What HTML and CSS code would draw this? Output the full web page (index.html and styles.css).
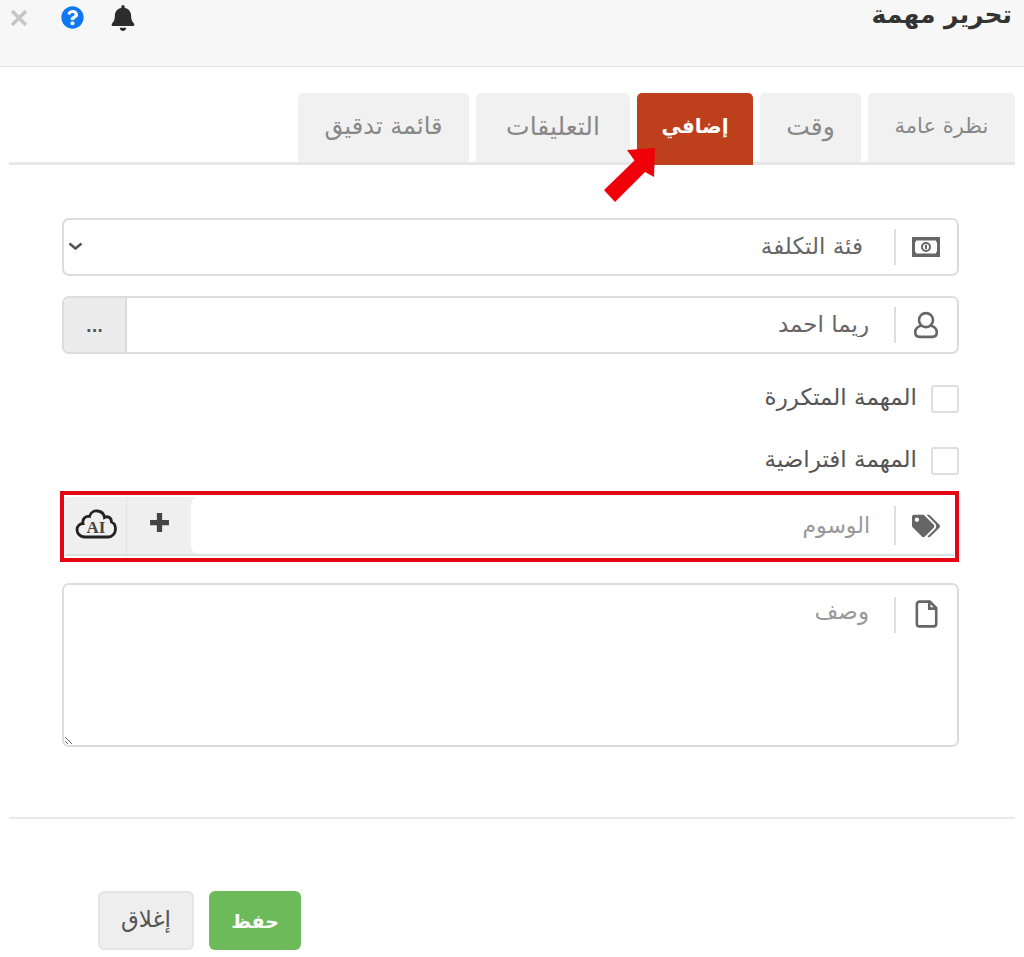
FILE: index.html
```html
<!doctype html>
<html lang="ar" dir="rtl">
<head>
<meta charset="utf-8">
<title>تحرير مهمة</title>
	<link rel="stylesheet" href="styles.css">
</head>

<body>
	<div class="head">
		<h1>تحرير مهمة</h1>
		<div class="head-tools">
			<svg class="bell" viewBox="0 0 448 512"><path d="M224 512c35.32 0 63.97-28.65 63.97-64H160.03c0 35.35 28.65 64 63.97 64zm215.39-149.71c-19.32-20.76-55.47-51.99-55.47-154.29 0-77.7-54.48-139.9-127.94-155.16V32c0-17.67-14.32-32-31.98-32s-31.98 14.33-31.98 32v20.84C118.56 68.1 64.08 130.3 64.08 208c0 102.3-36.15 133.53-55.47 154.29-6 6.45-8.66 14.16-8.61 21.71.11 16.4 12.98 32 32.1 32h383.8c19.12 0 32-15.6 32.1-32 .05-7.55-2.61-15.27-8.61-21.71z"/></svg>
			<svg class="help" viewBox="0 0 512 512"><path d="M504 256c0 136.997-111.043 248-248 248S8 392.997 8 256C8 119.083 119.043 8 256 8s248 111.083 248 248zM262.655 90c-54.497 0-89.255 22.957-116.549 63.758-3.536 5.286-2.353 12.415 2.715 16.258l34.699 26.31c5.205 3.947 12.621 3.008 16.665-2.122 17.864-22.658 30.113-35.797 57.303-35.797 20.429 0 45.698 13.148 45.698 32.958 0 14.976-12.363 22.667-32.534 33.976C247.128 238.528 216 254.941 216 296v4c0 6.627 5.373 12 12 12h56c6.627 0 12-5.373 12-12v-1.333c0-28.462 83.186-29.647 83.186-106.667 0-58.002-60.165-102-116.531-102zM256 338c-25.365 0-46 20.635-46 46 0 25.364 20.635 46 46 46s46-20.636 46-46c0-25.365-20.635-46-46-46z"/></svg>
			<svg class="close" viewBox="0 0 18 18"><path d="M2 2l14 14M16 2L2 16"/></svg>
		</div>
	</div>

	<div class="tabs">
		<a class="tab tab-1">نظرة عامة</a>
		<a class="tab tab-2">وقت</a>
		<a class="tab tab-3 active">إضافي</a>
		<a class="tab tab-4">التعليقات</a>
		<a class="tab tab-5">قائمة تدقيق</a>
		<svg class="arrow" viewBox="0 0 60 60"><path d="M55 1L27 3 34.500 13.500 4 43 15 55 45 25 54 30z"/></svg>
	</div>

	<form class="form">
		<div class="field">
			<span class="field-icon">
				<svg viewBox="0 0 30 26"><path class="bill" fill-rule="evenodd" d="M1 3h28v20H1zM5 6.500a2 2 0 0 1-1 2v9a2 2 0 0 1 1 2h20a2 2 0 0 1 1-2v-9a2 2 0 0 1-1-2z"/><path class="bill" fill-rule="evenodd" d="M15 8a5 5 0 1 0 0 10 5 5 0 0 0 0-10zm0 2a3 3 0 1 1 0 6 3 3 0 0 1 0-6z"/><path class="bill" d="M14 11h2v4h-2z"/></svg>
			</span>
			<select class="control">
				<option>فئة التكلفة</option>
			</select>
			<svg class="chevron" viewBox="0 0 15 8"><path d="M1.500 1.500l6 5 6-5"/></svg>
		</div>

		<div class="field field-2">
			<span class="field-icon">
				<svg viewBox="0 0 24 26"><path class="line" d="M12 2a6.500 6.500 0 0 0 0 13 6.500 6.500 0 0 0 0-13zM8 13.500C4 14.500 2 17 2 20c0 2.500 1.500 4 4 4h12c2.500 0 4-1.500 4-4 0-3-2-5.500-6-6.500"/></svg>
			</span>
			<input class="control value" type="text" value="ريما احمد">
			<button class="addon-more" type="button">...</button>
		</div>

		<label class="check check-1"><input type="checkbox"><span>المهمة المتكررة</span></label>
		<label class="check check-2"><input type="checkbox"><span>المهمة افتراضية</span></label>

		<div class="highlight">
			<div class="field field-tags">
				<span class="field-icon">
					<svg viewBox="0 0 640 512"><path class="solid" d="M497.941 225.941L286.059 14.059A48 48 0 0 0 252.118 0H48C21.49 0 0 21.49 0 48v204.118a48 48 0 0 0 14.059 33.941l211.882 211.882c18.744 18.745 49.136 18.746 67.882 0l204.118-204.118c18.745-18.745 18.745-49.137 0-67.882zM112 160c-26.51 0-48-21.49-48-48s21.49-48 48-48 48 21.49 48 48-21.49 48-48 48zm513.941 133.823L421.823 497.941c-18.745 18.745-49.137 18.745-67.882 0l-.36-.36L527.64 323.522c16.999-16.999 26.36-39.6 26.36-63.64s-9.362-46.641-26.36-63.64L331.397 0h48.721a48 48 0 0 1 33.941 14.059l211.882 211.882c18.745 18.745 18.745 49.137 0 67.882z"/></svg>
				</span>
				<input class="control" type="text" placeholder="الوسوم">
				<div class="addons">
					<button class="addon-btn" type="button"><svg viewBox="0 0 20 20"><path class="plus" d="M10 1v18M1 10h18"/></svg></button>
					<button class="addon-btn addon-ai" type="button">
						<svg viewBox="0 0 42 30"><path class="cloud" d="M10 28C4.500 28 2 24 2 20.500 2 17 5 14.500 8 14.500 7 10 10.500 6.500 14.500 7.500 15.500 3.500 19 1.500 22.500 2 26.500 2.500 29 5 29.500 8.500 33 6.500 36.500 9 36.500 13 39 14 40.500 16.500 40.500 20 40.500 24.500 37 28 33 28z"/><text x="21" y="24" text-anchor="middle" class="ai">AI</text></svg>
					</button>
				</div>
			</div>
		</div>

		<div class="field field-desc">
			<span class="field-icon">
				<svg viewBox="0 0 22 26"><path class="line" d="M2.500 4A2.500 2.500 0 0 1 5 1.500h9.500l6 6V22a2.500 2.500 0 0 1-2.500 2.500H5A2.500 2.500 0 0 1 2.500 22zM14 1.500V8h6.500"/></svg>
			</span>
			<textarea class="control" placeholder="وصف"></textarea>
		</div>
	</form>

	<div class="foot">
		<button class="btn btn-save" type="button">حفظ</button>
		<button class="btn btn-close" type="button">إغلاق</button>
	</div>
</body>
</html>
```

FILE: styles.css
```css
*{padding: 0;margin: 0;box-sizing: border-box;}
body{font-family: "DejaVu Sans", "Noto Sans", sans-serif;background-color: #fff;color: #555;height: 957px;overflow: hidden;}


.head{
	height: 67px;
	background-color: #f7f7f7;
	border-bottom: 1px solid #e2e2e2;
	display: flex;
	justify-content: space-between;
	align-items: flex-start;
	padding: 0 12px 0 10px;}
.head h1{
	font-size: 25px;
	line-height: 30px;
	font-weight: 700;
	color: #333;}
.head-tools{
	display: flex;
	align-items: center;
	height: 35px;}
.head-tools svg{display: block;}
.bell{width: 24px;height: 26px;margin-left: 27px;fill: #2c2c2c;}
.help{width: 23px;height: 23px;margin-left: 33px;fill: #0f78f2;}
.close{width: 18px;height: 18px;}
.close path{stroke: #c6c6c6;stroke-width: 3.500;fill: none;}


.tabs{
	position: relative;
	display: flex;
	gap: 7px;
	margin: 26px 9px 0;
	height: 72px;
	border-bottom: 3px solid #e7e7e7;}
.tab{
	height: 72px;
	background-color: #f1f1f1;
	border-radius: 5px 5px 0 0;
	border-bottom: 3px solid #e7e7e7;
	color: #888;
	font-size: 23px;
	display: flex;
	align-items: center;
	justify-content: center;
	padding-bottom: 3px;}
.tab-1{width: 147px;font-size: 21px;}
.tab-2{width: 101px;font-size: 25px;}
.tab-3{width: 116px;}
.tab-4{width: 154px;font-size: 25px;}
.tab-5{width: 171px;font-size: 24px;}
.tab.active{
	background-color: #bd3f1c;
	border-bottom-color: #bd3f1c;
	color: #fff;
	font-size: 20px;
	font-weight: 700;}
.arrow{
	position: absolute;
	top: 54px;
	left: 591px;
	width: 60px;
	height: 60px;
	fill: #f00008;}


.form{
	display: flex;
	flex-direction: column;
	padding: 53px 65px 0 65px;
	margin-left: -3px;}
.field{
	display: flex;
	align-items: stretch;
	height: 58px;
	border: 2px solid #dcdcdc;
	border-radius: 7px;
	background-color: #fff;
	overflow: hidden;}
.field-2{margin-top: 20px;}
.field-icon{
	width: 63px;
	flex: none;
	display: flex;
	align-items: center;
	justify-content: center;
	position: relative;
	background-color: #fff;}
.field-icon:after{
	content: "";
	position: absolute;
	left: 0;
	top: 9px;
	bottom: 9px;
	width: 2px;
	background-color: #dedede;}
.field-icon svg{display: block;width: 30px;height: 28px;}
.bill{fill: #666;}
.line{fill: none;stroke: #666;stroke-width: 2.400;}
.solid{fill: #666;}

.control{
	flex: 1;
	min-width: 0;
	border: none;
	outline: none;
	background-color: #fff;
	font-family: inherit;
	font-size: 23px;
	color: #666;
	padding: 0 25px 3px 4px;}
select.control{padding-right: 31px;padding-bottom: 2px;appearance: none;}
.control::placeholder{color: #999;opacity: 1;}
.chevron{
	flex: none;
	align-self: center;
	width: 15px;
	height: 8px;
	margin: 0 0 2px 4px;
	fill: none;
	stroke: #555;
	stroke-width: 2.600;}

.addon-more{
	width: 63px;
	flex: none;
	border: none;
	border-right: 2px solid #dcdcdc;
	background-color: #ececec;
	font-family: inherit;
	font-size: 15px;
	font-weight: 700;
	color: #555;
	padding-top: 3px;}


.check{
	display: flex;
	align-items: center;
	gap: 14px;
	height: 28px;
	font-size: 23px;
	color: #555;}
.check span{padding-bottom: 4px;}
.check-1{margin-top: 31px;}
.check-2{margin-top: 34px;}
.check input{
	appearance: none;
	width: 28px;
	height: 28px;
	border: 2px solid #dedede;
	border-radius: 3px;
	background-color: #fff;
	flex: none;}


.highlight{
	margin: 16px 0 0 -2px;
	height: 71px;
	border: 4px solid #e30613;
	padding: 2px 1px;}
.field-tags{
	height: 59px;
	border: none;
	border-bottom: 2px solid #d9e2e2;
	border-radius: 0;
	background-color: #efefef;}
.field-tags .field-icon{width: 60px;}
.field-tags .field-icon svg{width: 28px;margin-left: 4px;}
.field-tags .control{border-radius: 8px 0 0 8px;padding: 0 24px 0 4px;font-size: 22px;}
.addons{
	display: flex;
	flex: none;
	background-color: #efefef;}
.addon-btn{
	width: 64px;
	border: none;
	background-color: #efefef;
	display: flex;
	align-items: center;
	justify-content: center;}
.addon-ai{
	width: 62px;
	border-right: 1px solid #e2e2e2;}
.addon-btn svg{display: block;width: 21px;height: 21px;margin-bottom: 6px;}
.addon-ai svg{width: 42px;height: 30px;margin-bottom: 4px;}
.plus{stroke: #444;stroke-width: 5;fill: none;}
.cloud{fill: none;stroke: #222;stroke-width: 2.800;}
.ai{font-family: "Liberation Serif", serif;font-size: 17px;font-weight: 700;fill: #444;}


.field-desc{height: 164px;margin-top: 21px;}
.field-desc .field-icon{align-items: flex-start;padding-top: 15px;}
.field-desc .field-icon:after{top: 12px;bottom: auto;height: 36px;}
textarea.control{padding-top: 13px;resize: vertical;}


.foot{
	margin: 70px 9px 0;
	border-top: 2px solid #e9e9e9;
	padding: 72px 0 0 89px;
	display: flex;
	justify-content: flex-end;
	gap: 15px;}
.btn{
	height: 59px;
	border-radius: 6px;
	font-family: inherit;
	font-size: 19px;}
.btn-save{
	width: 92px;
	border: none;
	background-color: #6dba5b;
	color: #fff;
	font-weight: 700;}
.btn-close{
	width: 96px;
	border: 2px solid #e5e5e5;
	background-color: #eee;
	color: #555;
	font-size: 23px;
	padding-bottom: 3px;}
```
